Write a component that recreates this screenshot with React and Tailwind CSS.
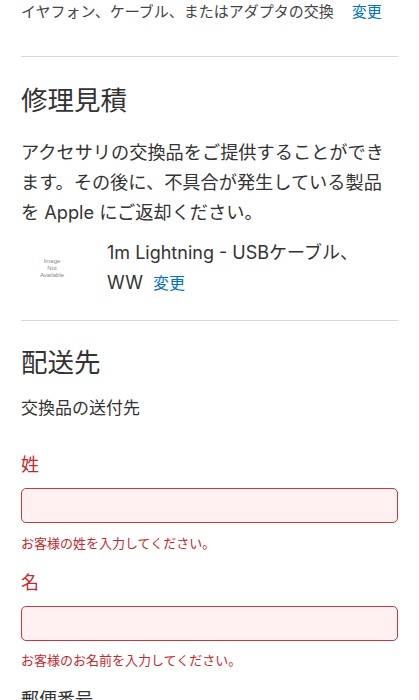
export default function App() {
  const font = { fontFamily: 'Inter, "Noto Sans CJK JP", sans-serif' };
  return (
    <div className="w-[419px] h-[700px] overflow-hidden bg-white text-[#333]" style={font}>
      <div className="px-[21px]">
        <div className="text-[15px] leading-[24px] text-[#444] whitespace-nowrap">
          イヤフォン、ケーブル、またはアダプタの交換
          <span className="ml-[18px] text-[#0070c9]">変更</span>
        </div>
        <div className="mt-[32px] h-px bg-[#d6d6d6]" />
        <h2 className="mt-[25px] text-[26.5px] leading-[36px] font-normal text-[#333]">修理見積</h2>
        <p className="mt-[19px] text-[18.2px] leading-[30px] text-[#333] whitespace-nowrap">
          アクセサリの交換品をご提供することができ<br />
          ます。その後に、不具合が発生している製品<br />
          を Apple にご返却ください。
        </p>
        <div className="mt-[11px] flex items-start">
          <div className="w-[62px] h-[60px] flex items-center justify-center shrink-0">
            <div className="text-[6px] leading-[7px] text-[#888] text-center" style={{ fontFamily: '"Liberation Sans", Arial, sans-serif' }}>
              Image<br />Not<br />Available
            </div>
          </div>
          <div className="ml-[24px] text-[18px] leading-[30px] text-[#333]">
            1m Lightning - USBケーブル、<br />
            WW<span className="ml-[10px] text-[16px] text-[#0070c9]">変更</span>
          </div>
        </div>
        <div className="mt-[22px] h-px bg-[#d6d6d6]" />
        <h2 className="mt-[23px] text-[26.5px] leading-[36px] font-normal text-[#333]">配送先</h2>
        <div className="mt-[15px] text-[17px] leading-[26px] text-[#333]">交換品の送付先</div>
        <label className="block mt-[31px] text-[18px] leading-[26px] text-[#c8272d]">姓</label>
        <div className="mt-[10px] h-[35px] rounded-[5px] border border-[#c9383c] bg-[#fff1f2]" />
        <div className="mt-[10px] text-[13px] leading-[20px] text-[#c8272d]">お客様の姓を入力してください。</div>
        <label className="block mt-[17px] text-[18px] leading-[26px] text-[#c8272d]">名</label>
        <div className="mt-[10px] h-[35px] rounded-[5px] border border-[#c9383c] bg-[#fff1f2]" />
        <div className="mt-[9px] text-[13px] leading-[20px] text-[#c8272d]">お客様のお名前を入力してください。</div>
        <label className="block mt-[17px] text-[18px] leading-[26px] text-[#333]">郵便番号</label>
      </div>
    </div>
  );
}
